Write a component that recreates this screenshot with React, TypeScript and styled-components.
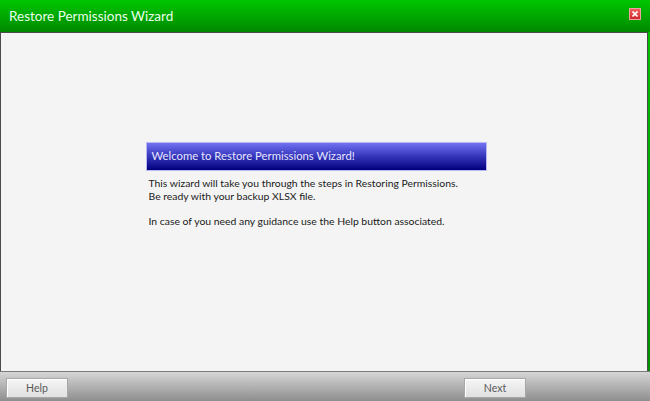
import React, { FC } from 'react';
import styled, { createGlobalStyle } from 'styled-components';

const GlobalStyle = createGlobalStyle`
  html, body {
    margin: 0;
    padding: 0;
    width: 650px;
    height: 401px;
    overflow: hidden;
  }
  body {
    font-family: Lato, 'Open Sans', sans-serif;
  }
`;

const App: FC = () => {
  return (
    <>
      <GlobalStyle />
      <Window>
        <TitleBar>
          <Title>Restore Permissions Wizard</Title>
          <CloseButton aria-label="Close">
            <svg width="6" height="6" viewBox="0 0 6 6">
              <path d="M0.5 0.5 L5.5 5.5 M5.5 0.5 L0.5 5.5" stroke="#fff" strokeWidth="1.6" />
            </svg>
          </CloseButton>
        </TitleBar>
        <Body>
          <Panel>
            <Banner>Welcome to Restore Permissions Wizard!</Banner>
            <Text>
              <Line>This wizard will take you through the steps in Restoring Permissions.</Line>
              <Line>Be ready with your backup XLSX file.</Line>
              <Spacer />
              <Line>In case of you need any guidance use the Help button associated.</Line>
            </Text>
          </Panel>
        </Body>
        <Footer>
          <Button>Help</Button>
          <Button>Next</Button>
        </Footer>
      </Window>
    </>
  );
};

const Window = styled.div`
  width: 650px;
  height: 401px;
  display: flex;
  flex-direction: column;
  background: linear-gradient(#00c400, #008a00);
`;

const TitleBar = styled.div`
  height: 32px;
  flex: none;
  display: flex;
  align-items: center;
  justify-content: space-between;
  padding: 0 9px 0 9px;
  box-sizing: border-box;
  background: linear-gradient(#00c600 0%, #00a800 50%, #008800 100%);
`;

const Title = styled.span`
  font-family: Lato, sans-serif;
  font-size: 13.5px;
  color: #eaffea;
  margin-top: -1px;
`;

const CloseButton = styled.div`
  width: 10px;
  height: 10px;
  margin-top: -4px;
  display: flex;
  align-items: center;
  justify-content: center;
  background: linear-gradient(#f06060, #d02828);
  border: 1px solid #f0a0a0;
`;

const Body = styled.div`
  flex: 1;
  background: #f4f4f4;
  border-top: 1px solid #4a4a4a;
  border-left: 1px solid #4a4a4a;
  border-right: 1px solid #4a4a4a;
  margin: 0 2px 0 0;
  display: flex;
  align-items: center;
  justify-content: center;
`;

const Panel = styled.div`
  width: 341px;
  display: flex;
  flex-direction: column;
  margin: 0 16px 35px 0;
`;

const Banner = styled.div`
  height: 29px;
  box-sizing: border-box;
  padding: 0 0 2px 5px;
  display: flex;
  align-items: center;
  font-size: 11.3px;
  color: #e6e6ff;
  background: linear-gradient(#7272f2 0%, #3a3ac0 45%, #00007e 100%);
  border: 1px solid #b8b8f0;
`;

const Text = styled.div`
  padding: 6px 0 0 3px;
  font-size: 10.4px;
  line-height: 13px;
  color: #1a1a1a;
`;

const Line = styled.div`
  white-space: nowrap;
`;

const Spacer = styled.div`
  height: 12px;
`;

const Footer = styled.div`
  height: 30px;
  flex: none;
  box-sizing: border-box;
  border-top: 1px solid #7a7a7a;
  background: linear-gradient(#d6d6d6, #8e8e8e);
  display: flex;
  align-items: center;
  padding: 2px 124px 0 6px;
  justify-content: space-between;
`;

const Button = styled.div`
  width: 62px;
  height: 20px;
  box-sizing: border-box;
  display: flex;
  align-items: center;
  justify-content: center;
  font-size: 10.5px;
  color: #5a5a5a;
  background: linear-gradient(#f6f6f6, #e0e0e0);
  border: 1px solid #a8a8a8;
  box-shadow: inset 1px 1px 0 #ffffff;
`;

export default App;
